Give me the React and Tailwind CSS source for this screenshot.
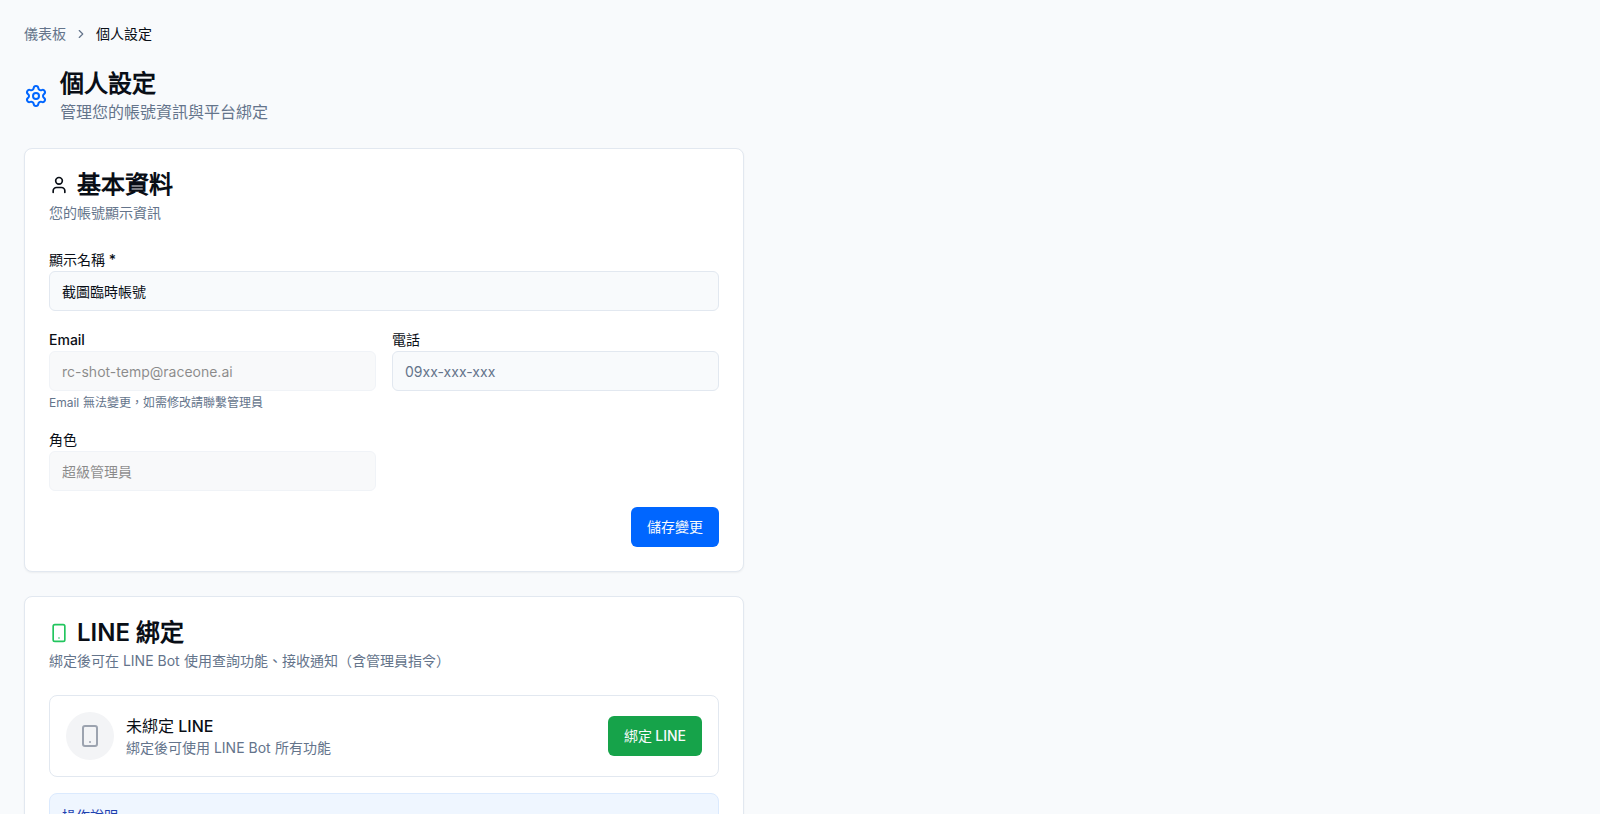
import { useState } from "react";
import { ChevronRight, Settings, Smartphone, User } from "lucide-react";

const inputClass =
  "flex h-10 w-full rounded-md border border-[#e2e8f0] bg-[#f8fafc] px-3 py-2 text-sm placeholder:text-[#64748b] disabled:bg-[#f3f4f6] disabled:text-[#171717] disabled:opacity-50 disabled:cursor-not-allowed";

function Card({ icon, title, description, children }) {
  return (
    <section className="rounded-lg border border-[#e2e8f0] bg-white shadow-xs">
      <div className="flex flex-col gap-[6px] p-6">
        <h2 className="flex items-center gap-2 text-2xl leading-none font-semibold">
          {icon}
          {title}
        </h2>
        <p className="text-sm text-[#64748b]">{description}</p>
      </div>
      <div className="flex flex-col gap-4 p-6 pt-0">{children}</div>
    </section>
  );
}

function Field({ id, label, hint, ...props }) {
  return (
    <div>
      <label htmlFor={id} className="text-sm leading-none font-medium">{label}</label>
      <input id={id} className={inputClass} {...props} />
      {hint && <p className="mt-1 text-xs text-[#64748b]">{hint}</p>}
    </div>
  );
}

export default function App() {
  const [form, setForm] = useState({ name: "截圖臨時帳號", phone: "" });

  return (
    <div
      lang="zh-TW"
      className="min-h-screen bg-[#f8fafc] font-['Inter',sans-serif] text-[#090e16]"
    >
      <main className="flex max-w-3xl flex-col gap-6 p-6">
        <nav aria-label="breadcrumb">
          <ol className="flex items-center gap-2 text-sm text-[#64748b]">
            <li><a href="#">儀表板</a></li>
            <li aria-hidden="true"><ChevronRight className="size-[14px]" /></li>
            <li className="text-[#090e16]">個人設定</li>
          </ol>
        </nav>

        <header className="flex items-center gap-3">
          <Settings className="size-6 text-[#0066ff]" />
          <div>
            <h1 className="text-2xl font-bold">個人設定</h1>
            <p className="text-[#64748b]">管理您的帳號資訊與平台綁定</p>
          </div>
        </header>

        <Card icon={<User className="size-5" />} title="基本資料" description="您的帳號顯示資訊">
          <Field id="name" label="顯示名稱 *" value={form.name}
            onChange={e => setForm({ ...form, name: e.target.value })} />
          <div className="grid grid-cols-2 gap-4">
            <Field id="email" label="Email" type="email" value="rc-shot-temp@raceone.ai" disabled
              hint="Email 無法變更，如需修改請聯繫管理員" />
            <Field id="phone" label="電話" placeholder="09xx-xxx-xxx" value={form.phone}
              onChange={e => setForm({ ...form, phone: e.target.value })} />
            <Field id="role" label="角色" value="超級管理員" disabled />
          </div>
          <div className="flex justify-end">
            <button className="h-10 rounded-md bg-[#0066ff] px-4 text-sm font-medium text-[#f8fafc]">儲存變更</button>
          </div>
        </Card>

        <Card
          icon={<Smartphone className="size-5 text-[#22c55e]" />}
          title="LINE 綁定"
          description="綁定後可在 LINE Bot 使用查詢功能、接收通知（含管理員指令）"
        >
          <div className="flex items-center justify-between rounded-lg border border-[#e2e8f0] p-4">
            <div className="flex items-center gap-3">
              <div className="flex size-12 items-center justify-center rounded-full bg-[#f3f4f6]">
                <Smartphone className="size-6 text-[#9ca3af]" />
              </div>
              <div>
                <p className="font-medium">未綁定 LINE</p>
                <p className="text-sm text-[#64748b]">綁定後可使用 LINE Bot 所有功能</p>
              </div>
            </div>
            <button className="h-10 rounded-md bg-[#16a34a] px-4 text-sm font-medium text-[#f8fafc]">綁定 LINE</button>
          </div>
          <div className="rounded-lg border border-[#dbeafe] bg-[#eff6ff] p-3">
            <p className="text-sm font-medium text-[#1e40af]">操作說明</p>
          </div>
        </Card>
      </main>
    </div>
  );
}
